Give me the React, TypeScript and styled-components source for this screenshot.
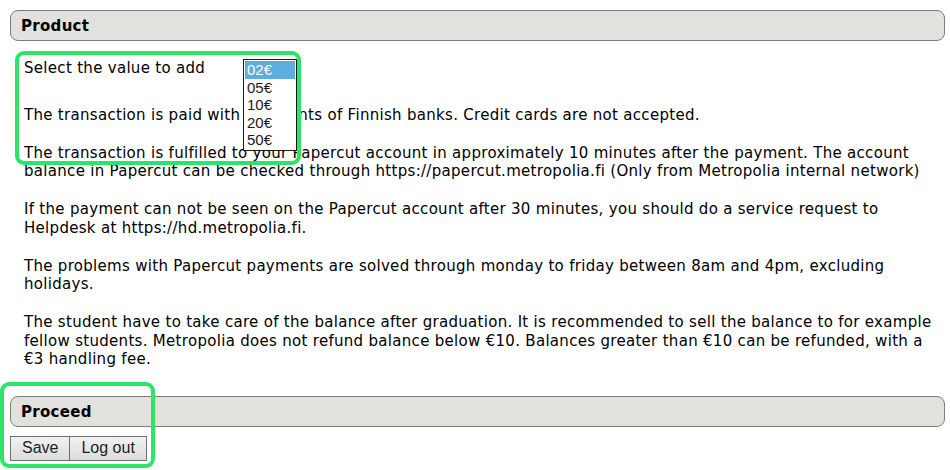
import React from 'react';
import styled, { createGlobalStyle } from 'styled-components';

const GlobalStyle = createGlobalStyle`
  html, body {
    margin: 0;
    padding: 0;
    background: #ffffff;
  }
  body {
    font-family: "DejaVu Sans", Verdana, sans-serif;
    font-size: 15px;
    color: #000000;
  }
`;

const Page = styled.div`
  position: relative;
  width: 950px;
  height: 470px;
  padding: 10px 5px 0 10px;
  box-sizing: border-box;
  overflow: hidden;
`;

const SectionBar = styled.div`
  height: 31px;
  box-sizing: border-box;
  border: 1px solid #7d7d7d;
  border-radius: 8px;
  background: #e1e1dd;
  display: flex;
  align-items: center;
  padding: 1px 0 0 10px;
  font-weight: bold;
  font-size: 15px;
  letter-spacing: 0.3px;
`;

const Content = styled.div`
  padding: 18px 0 0 14px;
  line-height: 18.5px;
  letter-spacing: 0.3px;
`;

const SelectRow = styled.div`
  display: flex;
  margin-bottom: 28px;
`;

const Label = styled.span`
  width: 218px;
  white-space: nowrap;
`;

const SelectHolder = styled.div`
  position: relative;
  width: 53px;
  height: 18px;
`;

const ListBox = styled.ul`
  position: absolute;
  top: 0;
  left: 1px;
  width: 52px;
  margin: 0;
  padding: 1px 0;
  list-style: none;
  border: 1px solid #1a1a1a;
  background: #ffffff;
  font-family: "Liberation Sans", Arial, sans-serif;
  font-size: 15px;
  letter-spacing: 0;
  line-height: 17.6px;
  z-index: 2;
  box-sizing: content-box;
`;

const Option = styled.li<{ $selected?: boolean }>`
  padding: 0 2px;
  margin: 0 1px;
  background: ${(p) => (p.$selected ? '#5caee0' : 'transparent')};
  color: ${(p) => (p.$selected ? '#ffffff' : '#1a1a1a')};
`;

const Para = styled.p`
  margin: 0 0 19.5px 0;
  white-space: nowrap;
`;

const ProceedBar = styled(SectionBar)`
  margin-top: 27px;
`;

const ButtonRow = styled.div`
  display: flex;
  margin-top: 9px;
`;

const Button = styled.button`
  height: 25px;
  margin: 0;
  padding: 0 11px;
  border: 1px solid #707070;
  border-radius: 0;
  background: linear-gradient(#f2f2f2, #dcdcdc);
  font-family: "Liberation Sans", Arial, sans-serif;
  font-size: 16px;
  color: #222222;
  & + & {
    margin-left: -1px;
  }
`;

const Highlight = styled.div<{ $x: number; $y: number; $w: number; $h: number }>`
  position: absolute;
  left: ${(p) => p.$x}px;
  top: ${(p) => p.$y}px;
  width: ${(p) => p.$w}px;
  height: ${(p) => p.$h}px;
  box-sizing: border-box;
  border: 4px solid #2de468;
  border-radius: 9px;
  pointer-events: none;
  z-index: 3;
`;

const values = ['02€', '05€', '10€', '20€', '50€'];

export default function App() {
  return (
    <Page>
      <GlobalStyle />
      <SectionBar>Product</SectionBar>
      <Content>
        <SelectRow>
          <Label>Select the value to add</Label>
          <SelectHolder>
            <ListBox>
              {values.map((v, i) => (
                <Option key={v} $selected={i === 0}>
                  {v}
                </Option>
              ))}
            </ListBox>
          </SelectHolder>
        </SelectRow>
        <Para>The transaction is paid with payments of Finnish banks. Credit cards are not accepted.</Para>
        <Para>
          The transaction is fulfilled to your Papercut account in approximately 10 minutes after the payment. The account
          <br />
          balance in Papercut can be checked through https://papercut.metropolia.fi (Only from Metropolia internal network)
        </Para>
        <Para>
          If the payment can not be seen on the Papercut account after 30 minutes, you should do a service request to
          <br />
          Helpdesk at https://hd.metropolia.fi.
        </Para>
        <Para>
          The problems with Papercut payments are solved through monday to friday between 8am and 4pm, excluding
          <br />
          holidays.
        </Para>
        <Para>
          The student have to take care of the balance after graduation. It is recommended to sell the balance to for example
          <br />
          fellow students. Metropolia does not refund balance below €10. Balances greater than €10 can be refunded, with a
          <br />
          €3 handling fee.
        </Para>
      </Content>
      <ProceedBar>Proceed</ProceedBar>
      <ButtonRow>
        <Button>Save</Button>
        <Button>Log out</Button>
      </ButtonRow>
      <Highlight $x={15} $y={51} $w={286} $h={114} />
      <Highlight $x={0} $y={382} $w={155} $h={86} />
    </Page>
  );
}
